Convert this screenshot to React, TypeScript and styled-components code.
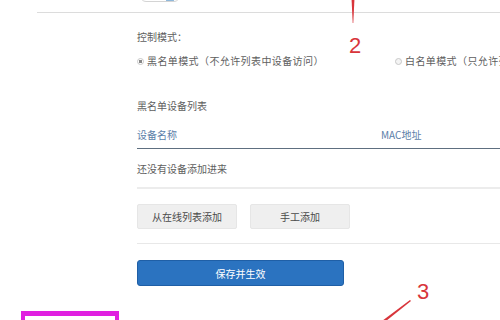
import React, { useState } from 'react';
import styled, { createGlobalStyle } from 'styled-components';

// 文本常量
const strings = {
  modeLabel: '控制模式：',
  blackMode: '黑名单模式（不允许列表中设备访问）',
  whiteMode: '白名单模式（只允许列表中设备访问）',
  listTitle: '黑名单设备列表',
  colName: '设备名称',
  colMac: 'MAC地址',
  empty: '还没有设备添加进来',
  addOnline: '从在线列表添加',
  addManual: '手工添加',
  save: '保存并生效',
};

const GlobalStyle = createGlobalStyle`
  html, body {
    margin: 0;
    padding: 0;
    background: #fff;
  }
  body {
    font-family: "Noto Sans CJK SC", "Liberation Sans", sans-serif;
    text-spacing-trim: space-all;
  }
`;

const App: React.FC = () => {
  const [mode, setMode] = useState<'black' | 'white'>('black');

  return (
    <Page>
      <GlobalStyle />
      <TopBar>
        <ToggleStub>
          <ToggleKnob />
        </ToggleStub>
      </TopBar>

      <Content>
        <Label>{strings.modeLabel}</Label>
        <RadioRow>
          <RadioOption $wide onClick={() => setMode('black')}>
            <RadioDot $checked={mode === 'black'} />
            {strings.blackMode}
          </RadioOption>
          <RadioOption onClick={() => setMode('white')}>
            <RadioDot $checked={mode === 'white'} />
            {strings.whiteMode}
          </RadioOption>
        </RadioRow>

        <SectionTitle>{strings.listTitle}</SectionTitle>
        <TableHead>
          <NameCol>{strings.colName}</NameCol>
          <MacCol>{strings.colMac}</MacCol>
        </TableHead>
        <EmptyRow>{strings.empty}</EmptyRow>

        <ButtonRow>
          <GrayButton>{strings.addOnline}</GrayButton>
          <GrayButton>{strings.addManual}</GrayButton>
        </ButtonRow>
        <Divider />
        <SaveButton>{strings.save}</SaveButton>
      </Content>

      {/* 截图上的标注 */}
      <MarkLine width="6" height="24" viewBox="0 0 6 24">
        <path d="M1.6 0 L4.4 0 L3.3 23 L2.7 23 Z" fill="#d8353b" />
      </MarkLine>
      <MarkNumber $left={349} $top={33}>2</MarkNumber>
      <MarkNumber $left={417} $top={279}>3</MarkNumber>
      <MarkArrow width="30" height="22" viewBox="0 0 30 22">
        <path d="M28 1 L29 2 L4 22 L0 22 Z" fill="#d8353b" />
      </MarkArrow>
      <MagentaBox />
    </Page>
  );
};

export default App;

// 页面
const Page = styled.div`
  position: relative;
  width: 500px;
  height: 320px;
  overflow: hidden;
  background: #fff;
  color: #5e5e5e;
  font-size: 10px;
`;

// 顶部分割线
const TopBar = styled.div`
  margin-left: 37px;
  height: 12px;
  border-bottom: 1px solid #dcdcdc;
  overflow: hidden;
`;

// 上方被截掉的开关
const ToggleStub = styled.div`
  position: relative;
  margin-left: 103px;
  margin-top: -16px;
  width: 40px;
  height: 18px;
  border: 1px solid #d4d4d4;
  border-radius: 6px;
  background: #fff;
  box-sizing: border-box;
`;

const ToggleKnob = styled.div`
  position: absolute;
  right: 5px;
  bottom: 0;
  width: 8px;
  height: 3px;
  border-radius: 4px 4px 0 0;
  background: #8fb8da;
`;

const Content = styled.div`
  padding-left: 137px;
`;

const Label = styled.div`
  margin-top: 17px;
  line-height: 14px;
`;

const RadioRow = styled.div`
  display: flex;
  margin-top: 10px;
  line-height: 14px;
  white-space: nowrap;
`;

const RadioOption = styled.label<{ $wide?: boolean }>`
  display: flex;
  align-items: center;
  gap: 3px;
  width: ${p => (p.$wide ? '258px' : 'auto')};
  flex-shrink: 0;
  letter-spacing: 0.4px;
  cursor: pointer;
`;

const RadioDot = styled.span<{ $checked: boolean }>`
  display: inline-block;
  width: 7px;
  height: 7px;
  border-radius: 50%;
  box-sizing: border-box;
  border: 1px solid #c8c8c8;
  background: ${p => (p.$checked ? 'radial-gradient(circle, #888 0 1.6px, #fff 2px)' : '#f4f4f4')};
`;

const SectionTitle = styled.div`
  margin-top: 31px;
  line-height: 14px;
`;

const TableHead = styled.div`
  display: flex;
  align-items: center;
  margin-top: 7px;
  height: 28px;
  border-bottom: 1px solid #5e6f80;
  color: #5b7ea8;
`;

const NameCol = styled.div`
  width: 244px;
`;

const MacCol = styled.div`
  flex: 1;
`;

const EmptyRow = styled.div`
  display: flex;
  align-items: center;
  height: 38px;
  border-bottom: 2px solid #ececec;
`;

const ButtonRow = styled.div`
  display: flex;
  gap: 13px;
  margin-top: 15px;
`;

const GrayButton = styled.button`
  width: 100px;
  height: 25px;
  padding: 0;
  border: 1px solid #e6e6e6;
  border-radius: 2px;
  background: #efefef;
  color: #4a4a4a;
  font-family: inherit;
  font-size: 10px;
  cursor: pointer;
`;

const Divider = styled.div`
  margin-top: 14px;
  height: 1px;
  background: #e8e8e8;
`;

const SaveButton = styled.button`
  display: block;
  margin-top: 16px;
  width: 207px;
  height: 26px;
  padding: 0;
  border: 1px solid #1f5fa6;
  border-radius: 3px;
  background: #2b73c0;
  color: #fff;
  font-family: inherit;
  font-size: 10px;
  cursor: pointer;
`;

// 标注：红线
const MarkLine = styled.svg`
  position: absolute;
  left: 350px;
  top: 0;
`;

// 标注：数字
const MarkNumber = styled.div<{ $left: number; $top: number }>`
  position: absolute;
  left: ${p => p.$left}px;
  top: ${p => p.$top}px;
  font-family: "Liberation Sans", sans-serif;
  font-size: 22px;
  line-height: 26px;
  color: #d8353b;
`;

// 标注：箭头
const MarkArrow = styled.svg`
  position: absolute;
  left: 382px;
  top: 299px;
`;

// 标注：洋红框
const MagentaBox = styled.div`
  position: absolute;
  left: 21px;
  top: 311px;
  width: 98px;
  height: 20px;
  box-sizing: border-box;
  border: 5px solid #e020e0;
  border-width: 5px 4px;
  background: #fff;
`;
